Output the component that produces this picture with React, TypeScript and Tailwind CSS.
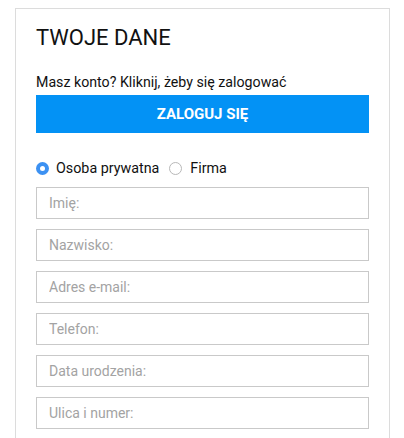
export default function App() {
  const fields = ["Imię:", "Nazwisko:", "Adres e-mail:", "Telefon:", "Data urodzenia:", "Ulica i numer:"];
  return (
    <div className="h-[438px] w-[404px] overflow-hidden bg-white pt-[8px] pl-[15px] font-['Roboto',sans-serif] text-[#111]">
      <div className="h-[460px] w-[375px] border border-[#dcdcdc] px-[20px] pt-[15px]">
        <h2 className="text-[22px] leading-[28px] font-normal">TWOJE DANE</h2>
        <p className="mt-[20px] text-[14.2px] leading-[20px]">Masz konto? Kliknij, żeby się zalogować</p>
        <button className="mt-[3px] flex h-[38px] w-full items-center justify-center bg-[#0392f5] text-[15px] font-bold text-white">
          ZALOGUJ SIĘ
        </button>
        <div className="mt-[25px] flex items-center text-[14.3px] leading-[20px]">
          <span className="flex h-[13px] w-[13px] items-center justify-center rounded-full bg-[#3c91f2]">
            <span className="h-[5px] w-[5px] rounded-full bg-white" />
          </span>
          <span className="ml-[7px]">Osoba prywatna</span>
          <span className="ml-[10px] h-[13px] w-[13px] rounded-full border border-[#b8b8b8] bg-white" />
          <span className="ml-[8px]">Firma</span>
        </div>
        <div className="mt-[9px] flex flex-col gap-[10px]">
          {fields.map((f) => (
            <input
              key={f}
              placeholder={f}
              className="h-[32px] w-full border border-[#c9c9c9] pl-[12px] text-[14px] outline-none placeholder:text-[#a3a3a3]"
            />
          ))}
        </div>
      </div>
    </div>
  );
}
